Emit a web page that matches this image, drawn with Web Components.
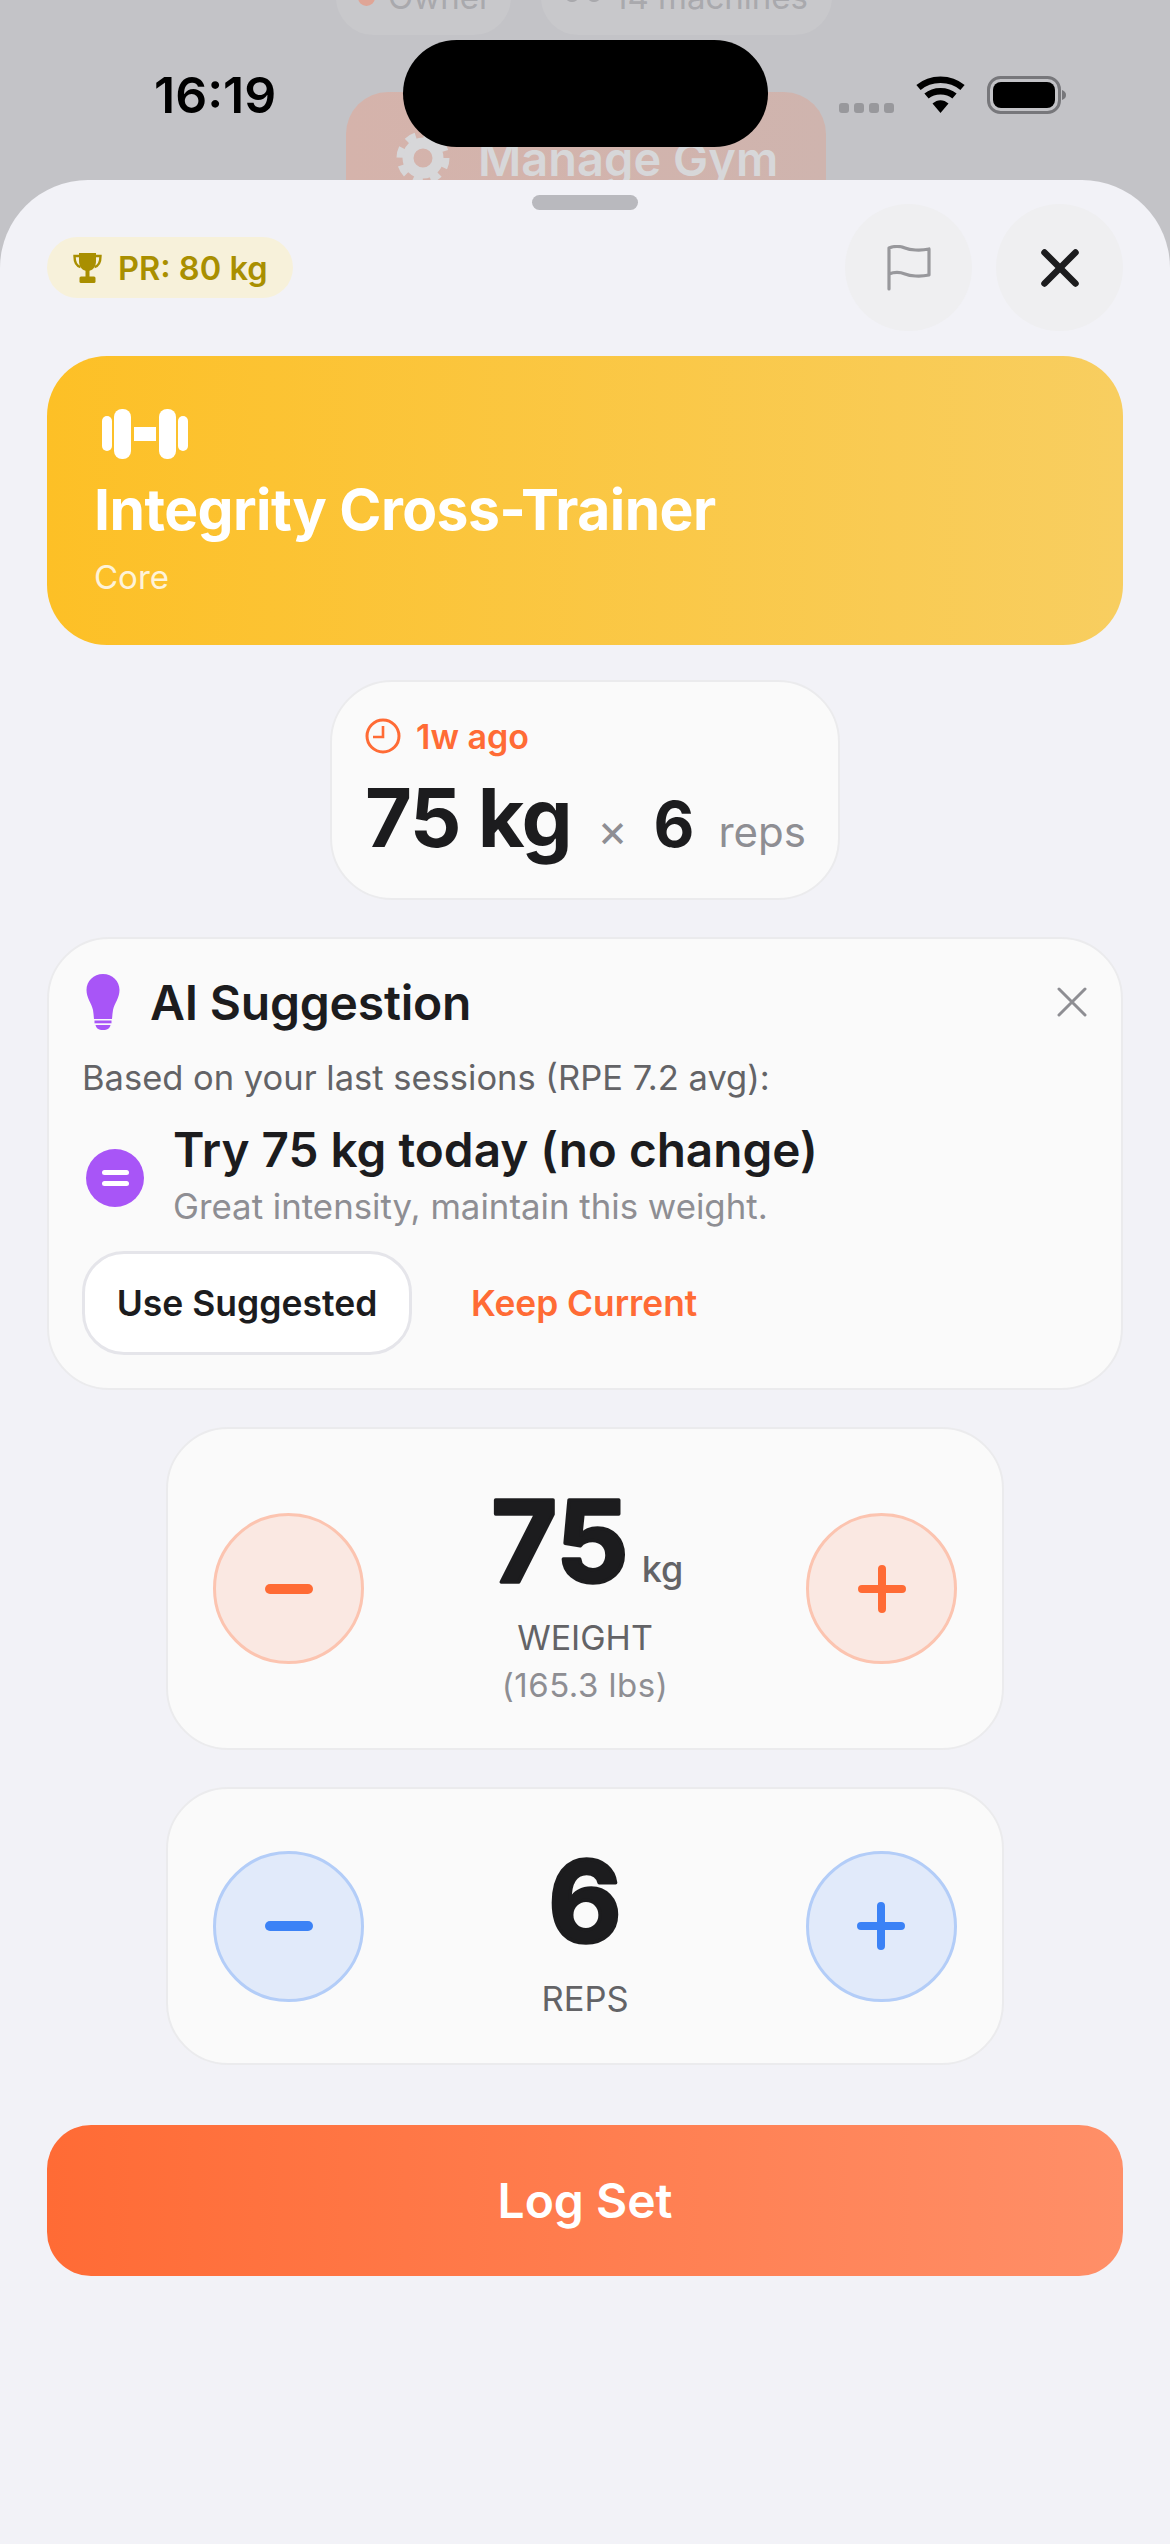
<!DOCTYPE html>
<html>
<head>
<meta charset="utf-8">
<title>Log Set</title>
<style>
  html, body { margin: 0; padding: 0; background: #c3c3c7; }
  body { font-family: 'Inter', 'Noto Sans', sans-serif; }
</style>
</head>
<body>
<workout-screen>
  <gym-backdrop slot="under"></gym-backdrop>
  <status-bar slot="over"></status-bar>
  <sheet-header></sheet-header>
  <machine-card name="Integrity Cross-Trainer" muscle="Core"></machine-card>
  <last-set when="1w ago" weight="75 kg" reps="6"></last-set>
  <ai-suggestion></ai-suggestion>
  <stepper-card tone="orange" value="75" unit="kg" label="WEIGHT" sub="(165.3 lbs)"></stepper-card>
  <stepper-card tone="blue" value="6" label="REPS"></stepper-card>
  <log-button>Log Set</log-button>
</workout-screen>

<script>
// small helper, every element just sets its html in an open shadow root
class ShadowBase extends HTMLElement {
  connectedCallback() {
    if (this.shadowRoot) return;
    let root = this.attachShadow({ mode: 'open' });
    root.innerHTML = this.template();
  }
  attr(name, fallback) {
    let v = this.getAttribute(name);
    return v === null ? (fallback || '') : v;
  }
}

class WorkoutScreen extends ShadowBase {
  template() {
    return `
    <style>
      :host { display: block; position: relative; width: 1170px; height: 2544px; overflow: hidden; background: #c3c3c7; }
      .wrap { padding-top: 180px; }
      .sheet {
        position: relative;
        height: 2364px;
        box-sizing: border-box;
        padding: 15px 47px 0;
        background: #f2f2f7;
        border-radius: 88px 88px 0 0;
        display: flex;
        flex-direction: column;
        align-items: center;
      }
      .handle { width: 106px; height: 15px; border-radius: 8px; background: #b9b9be; flex: none; }
    </style>
    <slot name="under"></slot>
    <div class="wrap">
      <div class="sheet">
        <div class="handle"></div>
        <slot></slot>
      </div>
    </div>
    <slot name="over"></slot>`;
  }
}

class GymBackdrop extends ShadowBase {
  template() {
    return `
    <style>
      :host { position: absolute; left: 0; top: 0; width: 1170px; height: 200px; display: block; overflow: hidden; font-family: 'Inter', sans-serif; }
      .pills { display: flex; gap: 30px; margin: -40px 0 0 336px; }
      .pill { height: 75px; border-radius: 38px; background: #c8c8cb; display: flex; align-items: center; gap: 13px; padding-left: 22px; font-size: 33px; color: #a9a9ad; white-space: nowrap; box-sizing: border-box; }
      .pill.a { width: 175px; padding-left: 22px; }
      .pill.b { width: 291px; padding-left: 24px; }
      .pill span { position: relative; top: -1px; }
      .dot { width: 17px; height: 26px; border-radius: 9px; background: #dfa596; position: relative; top: -5px; }
      .manage { margin: 57px 0 0 346px; width: 480px; height: 120px; box-sizing: border-box; border-radius: 42px 42px 0 0; background: linear-gradient(90deg, #d5b3ab, #cfb4ae); display: flex; gap: 28px; padding: 12px 0 0 50px; align-items: center; color: #d7d7d9; font-size: 47px; font-weight: 600; white-space: nowrap; }
      svg { flex: none; display: block; }
    </style>
    <div class="pills">
      <div class="pill a"><i class="dot"></i><span>Owner</span></div>
      <div class="pill b">
        <svg width="36" height="40" viewBox="0 0 36 40" style="position:relative;top:-14px"><g fill="none" stroke="#a9a9ad" stroke-width="4"><rect x="3" y="6" width="8" height="30" rx="3"/><rect x="25" y="6" width="8" height="30" rx="3"/><path d="M11 20h14"/></g></svg>
        <span>14 machines</span>
      </div>
    </div>
    <div class="manage">
      <svg width="54" height="54" viewBox="0 0 54 54"><circle cx="27" cy="27" r="15" fill="none" stroke="#d7d7d9" stroke-width="11"/><circle cx="27" cy="27" r="23" fill="none" stroke="#d7d7d9" stroke-width="7" stroke-dasharray="10 8.06"/></svg>
      <span>Manage Gym</span>
    </div>`;
  }
}

class StatusBar extends ShadowBase {
  template() {
    return `
    <style>
      :host { position: absolute; left: 0; top: 0; width: 1170px; height: 150px; display: block; font-family: 'Inter', sans-serif; }
      .row { display: flex; align-items: flex-start; height: 150px; }
      .time { margin: 66px 0 0 154px; width: 249px; font-size: 50px; line-height: 58px; font-weight: 600; color: #000; }
      .island { margin-top: 40px; width: 365px; height: 107px; border-radius: 54px; background: #000; flex: none; }
      .right { display: flex; margin: 76px 0 0 71px; }
      .dots { display: flex; gap: 5px; margin-top: 27px; }
      .dots i { width: 10px; height: 10px; border-radius: 3px; background: #98989c; }
      svg { display: block; flex: none; }
      .wifi { margin-left: 22px; }
      .batt { margin-left: 22px; }
    </style>
    <div class="row">
      <div class="time">16:19</div>
      <div class="island"></div>
      <div class="right">
        <div class="dots"><i></i><i></i><i></i><i></i></div>
        <svg class="wifi" width="49" height="37" viewBox="0 0 49 37">
          <path d="M2.5 11.5C14.5 1 34.5 1 46.5 11.5" fill="none" stroke="#000" stroke-width="6.5"/>
          <path d="M10.5 20C18 13.5 31 13.5 38.5 20" fill="none" stroke="#000" stroke-width="6.5"/>
          <path d="M16.5 27.5C21.5 23 27.5 23 32.5 27.5L24.5 37Z" fill="#000"/>
        </svg>
        <svg class="batt" width="80" height="38" viewBox="0 0 80 38">
          <rect x="1.5" y="1.5" width="71" height="35" rx="12" fill="none" stroke="#77777b" stroke-width="3"/>
          <rect x="6" y="6" width="62" height="26" rx="8" fill="#000"/>
          <path d="M75 14c3 1 4 3 4 5s-1 4-4 5z" fill="#77777b"/>
        </svg>
      </div>
    </div>`;
  }
}

class SheetHeader extends ShadowBase {
  template() {
    return `
    <style>
      :host { display: flex; width: 1076px; margin-top: -6px; align-items: center; font-family: 'Inter', sans-serif; }
      .pr { display: flex; align-items: center; gap: 16px; width: 246px; height: 61px; box-sizing: border-box; padding: 0 0 0 26px; border-radius: 31px; background: #f7f1da; color: #a98f00; font-size: 32.600px; font-weight: 600; white-space: nowrap; }
      .spacer { flex: 1; }
      .round { width: 127px; height: 127px; border-radius: 50%; background: #efeff1; display: flex; align-items: center; justify-content: center; }
      .round + .round { margin-left: 24px; }
      svg { display: block; flex: none; }
    </style>
    <div class="pr">
      <svg width="29" height="31" viewBox="0 0 29 31">
        <path d="M6 1h17v8c0 6-3.5 10-8.5 10S6 15 6 9Z" fill="#a98f00"/>
        <path d="M6 4H1.500c0 7 2 10 6 11M23 4h4.500c0 7-2 10-6 11" fill="none" stroke="#a98f00" stroke-width="2.400"/>
        <rect x="12.500" y="18" width="4" height="7" fill="#a98f00"/>
        <rect x="6.500" y="24.500" width="16" height="6.500" rx="1.500" fill="#a98f00"/>
      </svg>
      <span>PR: 80 kg</span>
    </div>
    <div class="spacer"></div>
    <div class="round">
      <svg width="44" height="46" viewBox="0 0 44 46" fill="none" stroke="#98989c" stroke-width="3.200" stroke-linecap="round" stroke-linejoin="round">
        <path d="M2 44V3c5-2 11-2 16 0s15 3 24 1v26c-9 2-19 1-24-1s-11-2-16 0"/>
      </svg>
    </div>
    <div class="round">
      <svg width="38" height="38" viewBox="0 0 38 38" stroke="#1c1c1e" stroke-width="6.500" stroke-linecap="round"><path d="M3.500 3.500l31 31M34.500 3.500l-31 31"/></svg>
    </div>`;
  }
}

class MachineCard extends ShadowBase {
  template() {
    return `
    <style>
      :host { display: block; width: 1076px; height: 289px; margin-top: 25px; box-sizing: border-box; padding: 53px 0 0 47px; border-radius: 60px; background: linear-gradient(90deg, #fdc026, #f8ce60); color: #fff; font-family: 'Inter', sans-serif; }
      svg { display: block; margin-left: 8px; }
      .name { font-size: 57px; line-height: 70px; font-weight: 700; letter-spacing: -0.55px; margin-top: 16px; white-space: nowrap; }
      .muscle { font-size: 33px; line-height: 40px; margin-top: 12px; opacity: .82; }
    </style>
    <svg width="86" height="50" viewBox="0 0 86 50" fill="#fff">
      <rect x="0" y="7" width="10" height="35" rx="5"/>
      <rect x="12" y="0" width="17" height="50" rx="8"/>
      <rect x="32" y="18" width="22" height="14"/>
      <rect x="57" y="0" width="17" height="50" rx="8"/>
      <rect x="76" y="7" width="10" height="35" rx="5"/>
    </svg>
    <div class="name">${this.attr('name')}</div>
    <div class="muscle">${this.attr('muscle')}</div>`;
  }
}

class LastSet extends ShadowBase {
  template() {
    return `
    <style>
      :host { display: block; width: 510px; height: 220px; margin-top: 35px; box-sizing: border-box; padding: 36px 0 0 33px; background: #fafafa; border: 2px solid #ebebed; border-radius: 62px; font-family: 'Inter', sans-serif; white-space: nowrap; }
      .when { display: flex; align-items: center; gap: 15px; height: 36px; color: #ff6b35; font-size: 34px; font-weight: 600; }
      .vals { display: flex; align-items: baseline; margin-top: 19px; line-height: 90px; color: #1c1c1e; }
      .w { font-size: 81px; font-weight: 700; letter-spacing: -1.500px; }
      .x { font-size: 46px; color: #8e8e93; margin-left: 26px; }
      .r { font-size: 63px; font-weight: 700; margin-left: 26px; }
      .u { font-size: 42px; color: #8e8e93; margin-left: 24px; }
      svg { display: block; flex: none; }
    </style>
    <div class="when">
      <svg width="36" height="36" viewBox="0 0 36 36" fill="none" stroke="#ff6b35" stroke-width="3"><circle cx="18" cy="18" r="16"/><path d="M18 8v11H8" stroke-width="2.600"/></svg>
      <span>${this.attr('when')}</span>
    </div>
    <div class="vals">
      <span class="w">${this.attr('weight')}</span>
      <span class="x">×</span>
      <span class="r">${this.attr('reps')}</span>
      <span class="u">reps</span>
    </div>`;
  }
}

class AiSuggestion extends ShadowBase {
  template() {
    return `
    <style>
      :host { display: block; width: 1076px; height: 453px; margin-top: 37px; box-sizing: border-box; padding: 35px 34px 0 33px; background: #fafafa; border: 2px solid #ebebed; border-radius: 62px; font-family: 'Inter', sans-serif; white-space: nowrap; }
      .head { display: flex; align-items: center; height: 56px; }
      .title { font-size: 48px; font-weight: 600; color: #1c1c1e; margin-left: 30px; flex: 1; letter-spacing: -0.200px; }
      .based { font-size: 34.500px; line-height: 40px; color: #636366; margin-top: 28px; }
      .try { display: flex; margin-top: 23px; }
      .eq { width: 58px; height: 58px; border-radius: 50%; background: #a855f7; margin: 28px 0 0 4px; flex: none; display: flex; flex-direction: column; align-items: center; justify-content: center; gap: 6px; }
      .eq i { width: 27px; height: 5px; border-radius: 3px; background: #fff; }
      .main { margin-left: 29px; }
      .big { font-size: 47.700px; line-height: 58px; font-weight: 600; color: #1c1c1e; }
      .small { font-size: 34.800px; line-height: 40px; color: #8e8e93; margin-top: 7px; }
      .btns { display: flex; align-items: center; margin-top: 25px; }
      .use { width: 330px; height: 104px; box-sizing: border-box; border: 3px solid #e5e5ea; border-radius: 42px; background: #fff; display: flex; align-items: center; justify-content: center; font-size: 35.500px; font-weight: 600; color: #1c1c1e; }
      .keep { margin-left: 59px; font-size: 35.300px; font-weight: 600; color: #ff6b35; }
      svg { display: block; flex: none; }
    </style>
    <div class="head">
      <svg width="34" height="56" viewBox="0 0 34 56" style="margin-left:4px">
        <path d="M17 0C7.500 0 .5 7 .5 16c0 8 5 13 6.500 20 .6 3 .6 6 1 9h18c.4-3 .4-6 1-9 1.500-7 6.500-12 6.500-20C33.500 7 26.500 0 17 0Z" fill="#a855f7"/>
        <rect x="8.500" y="46.500" width="17" height="2.800" fill="#a855f7"/>
        <path d="M9.500 51h15c-.5 3-3 5-7.500 5s-7-2-7.500-5Z" fill="#a855f7"/>
      </svg>
      <div class="title">AI Suggestion</div>
      <svg width="30" height="30" viewBox="0 0 30 30" stroke="#8e8e93" stroke-width="3" stroke-linecap="round"><path d="M2 2l26 26M28 2L2 28"/></svg>
    </div>
    <div class="based">Based on your last sessions (RPE 7.2 avg):</div>
    <div class="try">
      <div class="eq"><i></i><i></i></div>
      <div class="main">
        <div class="big">Try 75 kg today (no change)</div>
        <div class="small">Great intensity, maintain this weight.</div>
      </div>
    </div>
    <div class="btns">
      <div class="use">Use Suggested</div>
      <div class="keep">Keep Current</div>
    </div>`;
  }
}

class StepperCard extends ShadowBase {
  template() {
    let blue = this.attr('tone') === 'blue';
    let col = blue ? '#3b82f6' : '#ff6b35';
    let bg = blue ? '#e1eafa' : '#fae8e2';
    let line = blue ? '#b3cdf8' : '#fcc4b0';
    let unit = this.attr('unit');
    let sub = this.attr('sub');
    let h = sub ? 323 : 278;
    let w = sub ? 146 : 80;
    return `
    <style>
      :host { display: flex; align-items: center; justify-content: space-between; width: 838px; height: ${h}px; margin-top: 37px; box-sizing: border-box; padding: 0 45px; background: #fafafa; border: 2px solid #ebebed; border-radius: 62px; font-family: 'Inter', sans-serif; }
      .btn { width: 151px; height: 151px; box-sizing: border-box; border-radius: 50%; background: ${bg}; border: 3px solid ${line}; display: flex; align-items: center; justify-content: center; flex: none; }
      .mid { display: flex; flex-direction: column; align-items: center; text-align: center; }
      .val { display: flex; align-items: flex-end; height: 130px; }
      .val svg text { font-family: 'Inter', sans-serif; font-size: 113px; font-weight: 700; fill: #1c1c1e; stroke: #1c1c1e; stroke-width: 3.500px; stroke-linejoin: round; text-anchor: middle; }
      .unit { font-size: 36px; line-height: 40px; font-weight: 500; color: #636366; margin: 0 0 13px 9px; }
      .lab { font-size: ${sub ? 34 : 34.5}px; line-height: 40px; color: #636366; margin-top: 16px; }
      .sub { font-size: 33px; line-height: 40px; color: #8e8e93; margin-top: 7px; letter-spacing: 0.5px; }
      svg { display: block; }
    </style>
    <div class="btn">
      <svg width="48" height="48" viewBox="0 0 48 48" stroke="${col}" stroke-width="10" stroke-linecap="round"><path d="M5 24h38"/></svg>
    </div>
    <div class="mid">
      <div class="val">
        <svg width="${w}" height="130" viewBox="0 0 ${w} 130"><text x="${w / 2}" y="${sub ? 110 : 109}">${this.attr('value')}</text></svg>
        ${unit ? `<span class="unit">${unit}</span>` : ''}
      </div>
      <div class="lab">${this.attr('label')}</div>
      ${sub ? `<div class="sub">${sub}</div>` : ''}
    </div>
    <div class="btn">
      <svg width="48" height="48" viewBox="0 0 48 48" stroke="${col}" stroke-width="8" stroke-linecap="round"><path d="M4 24h40M24 4v40"/></svg>
    </div>`;
  }
}

class LogButton extends ShadowBase {
  template() {
    return `
    <style>
      :host { display: flex; align-items: center; justify-content: center; width: 1076px; height: 151px; margin-top: 60px; border-radius: 44px; background: linear-gradient(90deg, #ff6b35, #ff8f68); color: #fff; font-family: 'Inter', sans-serif; font-size: 48px; font-weight: 600; }
    </style>
    <slot></slot>`;
  }
}

customElements.define('workout-screen', WorkoutScreen);
customElements.define('gym-backdrop', GymBackdrop);
customElements.define('status-bar', StatusBar);
customElements.define('sheet-header', SheetHeader);
customElements.define('machine-card', MachineCard);
customElements.define('last-set', LastSet);
customElements.define('ai-suggestion', AiSuggestion);
customElements.define('stepper-card', StepperCard);
customElements.define('log-button', LogButton);
</script>
</body>
</html>
